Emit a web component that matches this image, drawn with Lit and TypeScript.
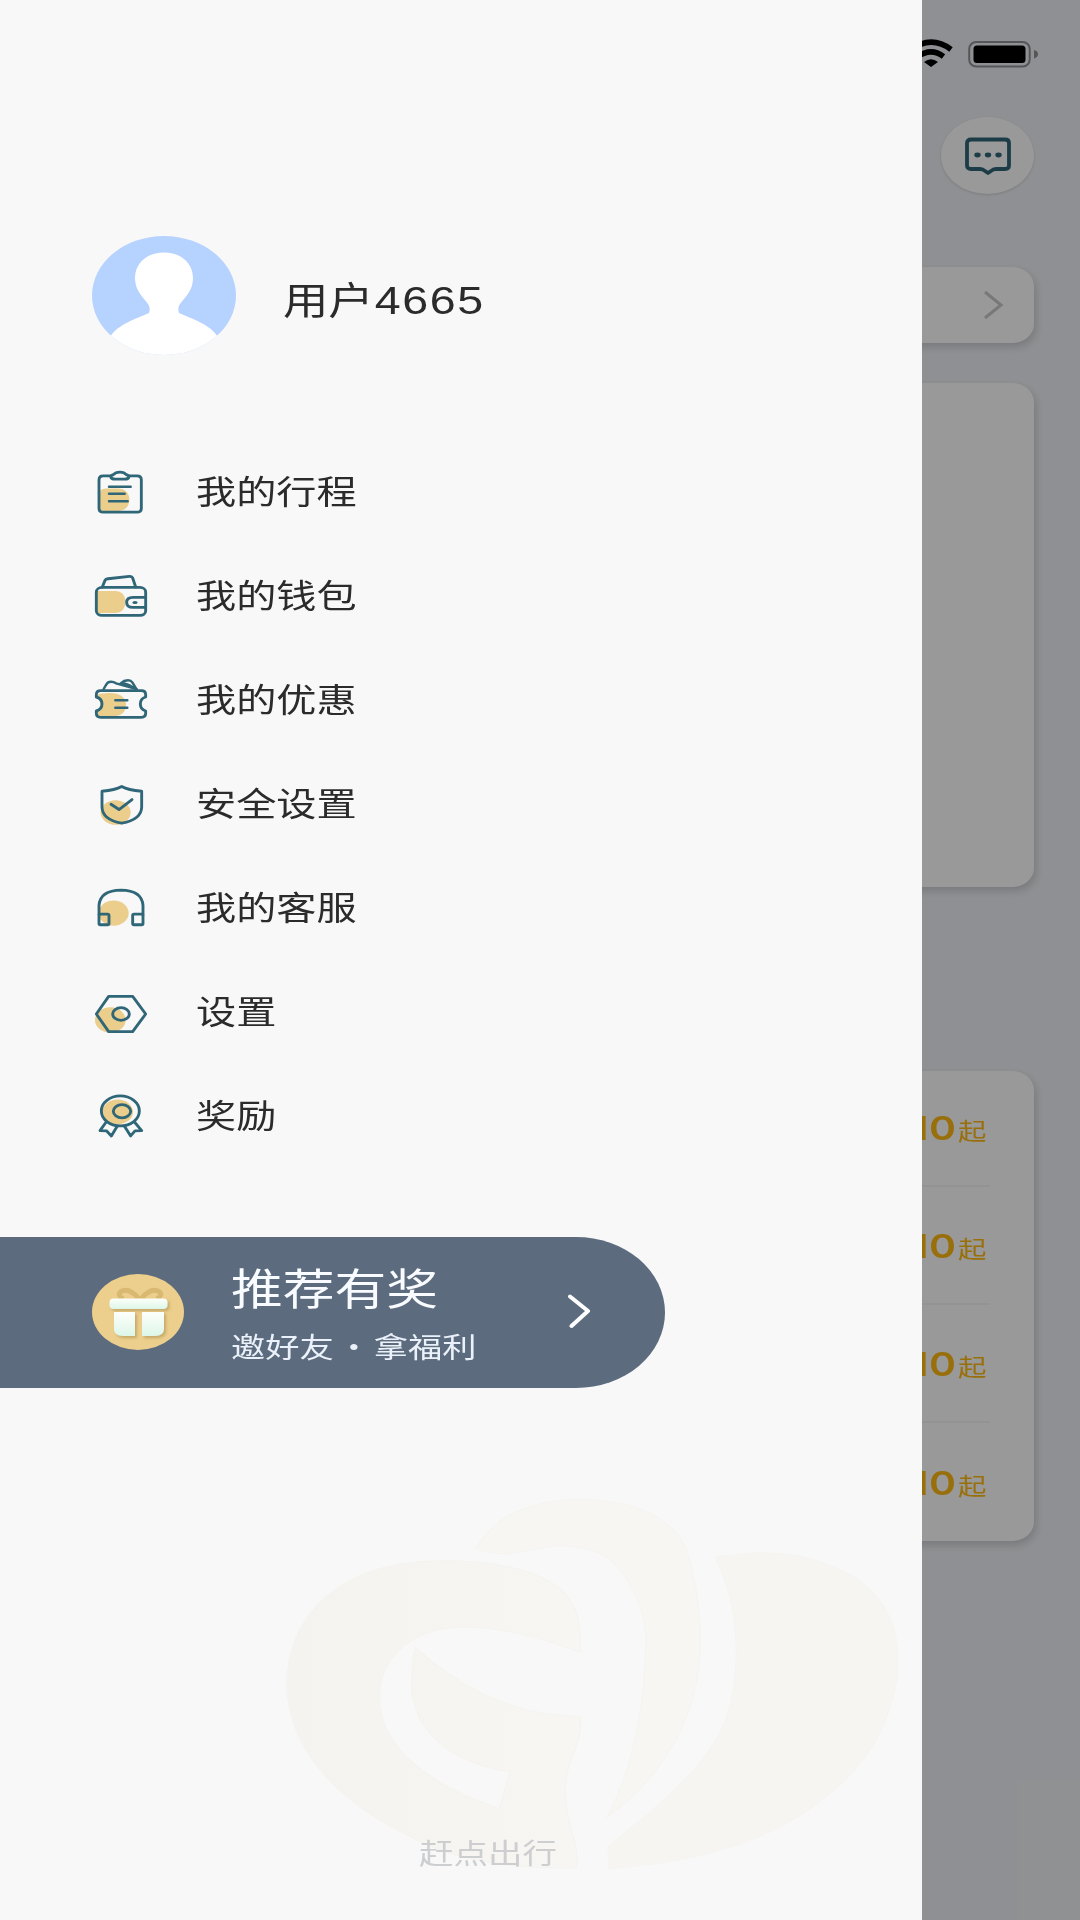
import { LitElement, html, css, svg } from "lit";
import { customElement } from "lit/decorators.js";

interface MenuItem {
  label: string;
  box: string;
  icon: unknown;
}

const MENU: MenuItem[] = [
  {
    label: "我的行程",
    box: "36 46.5 180 156",
    icon: svg`
      <path class="tint" d="M60 186V124Q64 114 80 114H112C136 114 148 128 148 148C148 168 136 181 112 182Z"/>
      <path class="line" d="M92 76H70Q57 76 57 88V173Q57 185 70 185H171Q184 185 184 173V88Q184 76 171 76H147"/>
      <path class="line" d="M92 78Q93 74 101 72Q106 65 120 65Q133 65 138 72Q146 74 147 78Q146 86 134 86H106Q93 86 92 78Z"/>
      <path class="line thin" d="M87 109H152M87 130H134M87 152H143"/>`,
  },
  {
    label: "我的钱包",
    box: "36 358.8 180 156",
    icon: svg`
      <path class="tint" d="M50 422H104C126 422 136 436 136 454C136 474 126 488 104 488H50Z"/>
      <path class="line" d="M67 410L75 390Q77 386 84 385L148 378Q156 377 158 383L167 410"/>
      <rect class="line" x="49" y="411" width="148" height="84" rx="17" ry="14"/>
      <path class="line" d="M197 441H159Q140 441 140 456Q140 471 159 471H197"/>
      <ellipse class="dot" cx="165" cy="456" rx="8" ry="4.5"/>`,
  },
  {
    label: "我的优惠",
    box: "36 41 180 156",
    icon: svg`
      <path class="tint" d="M54 103Q60 97 96 98C126 100 138 116 138 133C138 152 126 166 106 167H60Q50 165 50 154Q60 142 62 131Q60 118 47 112Z"/>
      <path class="line thin" d="M71 86L79 72Q83 64 93 64Q101 64 108 69L170 86M122 69Q132 60 144 60Q153 60 157 66L168 84M122 70Q140 68 158 81"/>
      <path class="line" d="M62 91H184Q197 91 197 103V110Q181 115 181 131Q181 147 197 152V159Q197 171 184 171H62Q49 171 49 159V152Q66 147 66 131Q66 115 49 110V103Q49 91 62 91Z"/>
      <path class="line thin" d="M106 120H142M106 142H142"/>`,
  },
  {
    label: "安全设置",
    box: "36 353.4 180 156",
    icon: svg`
      <ellipse class="tint" cx="107" cy="457" rx="45" ry="37"/>
      <path class="line" d="M125 379Q144 390 185 393V441Q184 478 125 489Q67 478 66 441V393Q106 390 125 379Z"/>
      <path class="line" d="M93 432L117 448L156 418"/>`,
  },
  {
    label: "我的客服",
    box: "36 35.7 180 156",
    icon: svg`
      <ellipse class="tint" cx="101" cy="129" rx="45" ry="38"/>
      <path class="line" d="M57 134V106Q60 61 123 60Q186 61 189 106V134"/>
      <rect class="line" x="57" y="132" width="30" height="32" rx="4"/>
      <rect class="line" x="158" y="132" width="31" height="32" rx="4"/>`,
  },
  {
    label: "设置",
    box: "36 348 180 156",
    icon: svg`
      <ellipse class="tint" cx="91" cy="450" rx="46" ry="38"/>
      <path class="line" d="M86 379H158L197 432L158 485H86L49 432Z"/>
      <ellipse class="line" cx="123" cy="432" rx="25" ry="19"/>`,
  },
  {
    label: "奖励",
    box: "36 660.3 180 156",
    icon: svg`
      <ellipse class="tint" cx="113" cy="726" rx="46" ry="37"/>
      <ellipse class="line" cx="121" cy="723" rx="57" ry="45"/>
      <ellipse class="line" cx="126" cy="724" rx="26" ry="20"/>
      <path class="line" d="M78 757L60 782L80 783L94 798L112 768M164 757L185 782L165 783L152 798L133 768"/>`,
  },
];

@customElement("app-root")
export class AppRoot extends LitElement {
  static styles = css`
    :host {
      display: block;
      position: relative;
      width: 1080px;
      height: 1920px;
      overflow: hidden;
      font-family: "Noto Sans CJK SC", sans-serif;
      color: #2b2b2b;
    }
    svg {
      display: block;
      flex: none;
    }
    .home {
      box-sizing: border-box;
      height: 1920px;
      padding: 39px 46px 0 46px;
      background: #eff1f5;
      display: flex;
      flex-direction: column;
    }
    .status {
      display: flex;
      justify-content: flex-end;
      gap: 14px;
      height: 30px;
      margin-right: -6px;
    }
    .chat {
      align-self: flex-end;
      width: 93px;
      height: 77px;
      margin-top: 48px;
      border-radius: 50%;
      background: #fff;
      box-shadow: 0 1px 3px rgba(0, 0, 0, 0.14);
      display: flex;
      align-items: center;
      justify-content: center;
    }
    .panel {
      background: #fff;
      border-radius: 22px / 19px;
      box-shadow: 2px 4px 8px rgba(20, 30, 40, 0.18);
    }
    .search {
      height: 76px;
      margin-top: 73px;
      display: flex;
      align-items: center;
      justify-content: flex-end;
    }
    .search svg {
      margin-right: 30px;
    }
    .map {
      height: 504px;
      margin-top: 40px;
    }
    .prices {
      box-sizing: border-box;
      height: 470px;
      margin-top: 184px;
      padding: 0 44px 0 48px;
    }
    .price {
      box-sizing: border-box;
      height: 116px;
      margin-bottom: 2.2px;
      display: flex;
      justify-content: flex-end;
      align-items: baseline;
      padding: 32px 4px 0 0;
      border-bottom: 2px solid #f5f6f6;
      color: #fdb913;
      line-height: 50px;
    }
    .price:last-child {
      border: 0;
    }
    .amount {
      font: 600 33px/50px Inter, sans-serif;
      transform: scaleX(1.24);
      transform-origin: right;
      margin-right: 1px;
      letter-spacing: 0.4px;
    }
    .from {
      width: 28px;
      font-size: 23.5px;
      transform: scaleX(1.21);
      transform-origin: left;
    }
    .scrim {
      position: absolute;
      inset: 0;
      background: rgba(0, 0, 0, 0.4);
    }
    .drawer {
      position: absolute;
      inset: 0 auto 0 0;
      width: 922px;
      box-sizing: border-box;
      padding-top: 236px;
      background: #f8f8f8;
      display: flex;
      flex-direction: column;
    }
    .wide {
      display: inline-block;
      white-space: nowrap;
      transform: scaleX(1.21);
      transform-origin: left;
    }
    .user {
      display: flex;
      align-items: center;
      height: 119px;
      padding-left: 92px;
      gap: 47px;
    }
    .name {
      font-size: 37.5px;
      line-height: 54px;
      padding-top: 7px;
    }
    .digits {
      font-family: "Liberation Sans", sans-serif;
      font-size: 38.5px;
      letter-spacing: 1.3px;
      margin-left: 0.8px;
    }
    .menu {
      margin-top: 84.5px;
      display: flex;
      flex-direction: column;
    }
    .item {
      height: 104.1px;
      display: flex;
      align-items: center;
      padding-left: 92px;
      gap: 44px;
    }
    .label {
      font-size: 33.2px;
      line-height: 48px;
      margin-top: -3.6px;
    }
    .tint {
      fill: #ebcd8c;
    }
    .line {
      fill: none;
      stroke: #2f6678;
      stroke-width: 8.6;
      stroke-linecap: round;
      stroke-linejoin: round;
    }
    .thin {
      stroke-width: 7.4;
    }
    .dot {
      fill: #2f6678;
    }
    .banner {
      box-sizing: border-box;
      width: 665px;
      height: 151px;
      margin-top: 69px;
      padding: 0 73px 2px 92px;
      border-radius: 0 89px 89px 0 / 0 75.5px 75.5px 0;
      background: #5c6b7d;
      color: #f8fbff;
      display: flex;
      align-items: center;
    }
    .promo {
      flex: 1;
      padding-left: 47px;
      display: flex;
      flex-direction: column;
      align-items: flex-start;
    }
    .title {
      font-size: 42.8px;
      line-height: 62px;
      margin-top: -2px;
    }
    .sub {
      font-size: 28.3px;
      line-height: 42px;
      margin-top: 8px;
      word-spacing: -3.9px;
      color: #eaf1fa;
    }
    .mark {
      position: absolute;
      left: 270px;
      top: 1470px;
    }
    .brand {
      position: relative;
      margin: auto 0 47px 419px;
      width: 115px;
      font-size: 28.5px;
      line-height: 42px;
      color: #cccecf;
    }
  `;

  private home() {
    return html`
      <div class="home">
        <div class="status">
          <svg width="46" height="30" viewBox="0 0 46 30">
            <g fill="none" stroke="#000" stroke-width="5.600">
              <path d="M1.500 11.500Q23 -4.500 43 10.500"/>
              <path d="M9 18Q23 8 35.500 17.500"/>
            </g>
            <path d="M16 23Q23 17.500 30 23L23 28Z"/>
          </svg>
          <svg width="72" height="30" viewBox="0 0 72 30">
            <rect x="1.200" y="3" width="60.500" height="24.500" rx="7" fill="none" stroke="#8f9093" stroke-width="2"/>
            <rect x="5.500" y="6.500" width="52" height="17.500" rx="3.500"/>
            <path d="M66 11Q70 12 70 15.200Q70 18 66 19.500Z" fill="#8f9093"/>
          </svg>
        </div>
        <div class="chat">
          <svg width="48" height="38" viewBox="0 0 48 38">
            <path d="M7 2.500H41Q45 2.500 45 6V28.500Q45 32 41 32H32Q29 32 27 34L24 36L21 34Q19 32 16 32H7Q3 32 3 28.500V6Q3 2.500 7 2.500Z" fill="none" stroke="#2f6678" stroke-width="3.800" stroke-linejoin="round"/>
            <g fill="#2f6678">
              <ellipse cx="13.500" cy="18" rx="3.200" ry="2.400"/>
              <ellipse cx="24" cy="18" rx="3.200" ry="2.400"/>
              <ellipse cx="34.500" cy="18" rx="3.200" ry="2.400"/>
            </g>
          </svg>
        </div>
        <div class="panel search">
          <svg width="21" height="30" viewBox="0 0 21 30">
            <path d="M2 2L18 15L2 28" fill="none" stroke="#c9c9c9" stroke-width="3"/>
          </svg>
        </div>
        <div class="panel map"></div>
        <div class="panel prices">
          ${[0, 1, 2, 3].map(
            () => html`<div class="price"><span class="amount">10</span><span class="from">起</span></div>`
          )}
        </div>
      </div>
    `;
  }

  private watermark() {
    return html`
      <svg class="mark" width="652" height="450" viewBox="0 0 1549 1350" preserveAspectRatio="none">
        <defs>
          <linearGradient id="leaf" x1="0" x2="1" y1="0" y2="0">
            <stop offset="0" stop-color="#f4f3f0"/>
            <stop offset="1" stop-color="#f7f6f2"/>
          </linearGradient>
        </defs>
        <path fill="#f7f6f2" stroke="#f5f4f0" stroke-width="3" d="M490 236C530 140 620 88 740 88C880 92 960 150 990 240C1030 400 1030 570 1005 680C970 840 890 960 800 1042C870 880 890 690 893 520C895 430 860 330 810 270C770 235 700 215 640 235C590 250 540 262 490 236Z"/>
        <path fill="url(#leaf)" stroke="#f4f3ef" stroke-width="3" d="M738 546C640 505 560 470 455 472C340 474 262 560 260 680C260 840 390 950 545 1016L570 905C450 885 345 800 337 660Q335 580 346 533C440 640 560 735 738 740C740 850 700 850 702 980C705 1080 735 1110 728 1194C560 1196 440 1170 340 1104C150 990 45 830 40 650C40 430 170 275 400 272C500 270 640 290 700 370C740 430 735 470 738 546Z"/>
        <path fill="#f6f5f2" stroke="#f5f4f0" stroke-width="3" d="M1058 262C1180 235 1290 250 1380 315C1470 390 1500 480 1490 620C1470 780 1410 900 1300 1000C1190 1110 1020 1175 806 1196L803 1130C920 1010 1030 900 1080 760C1120 620 1120 420 1058 262Z"/>
      </svg>
    `;
  }

  render() {
    return html`
      ${this.home()}
      <div class="scrim"></div>
      <div class="drawer">
        ${this.watermark()}
        <div class="user">
          <svg width="144" height="119" viewBox="0 0 144 119">
            <clipPath id="face"><ellipse cx="72" cy="59.500" rx="72" ry="59.500"/></clipPath>
            <g clip-path="url(#face)">
              <rect width="144" height="119" fill="#b6d2ff"/>
              <path fill="#fff" d="M72 16.500C90 16.500 101 28 101 42C101 54 94 60 88 68C86 71 86 74 87 77C100 83 118 88 126 101V119H18V101C26 88 44 83 57 77C58 74 58 71 56 68C50 60 43 54 43 42C43 28 54 16.500 72 16.500Z"/>
            </g>
          </svg>
          <div class="name wide">用户<span class="digits">4665</span></div>
        </div>
        <div class="menu">
          ${MENU.map(
            (m) => html`
              <div class="item">
                <svg width="60" height="52" viewBox=${m.box}>${m.icon}</svg>
                <span class="label wide">${m.label}</span>
              </div>
            `
          )}
        </div>
        <div class="banner">
          <svg width="92" height="76" viewBox="0 0 92 76">
            <defs>
              <linearGradient id="gift" x1="0" x2="0" y1="0" y2="1">
                <stop offset="0" stop-color="#fdfffb"/>
                <stop offset="1" stop-color="#ddf6e8"/>
              </linearGradient>
              <filter id="soft" x="-20%" y="-20%" width="150%" height="150%">
                <feDropShadow dx="2" dy="2" stdDeviation="1.500" flood-color="#a58748" flood-opacity="0.55"/>
              </filter>
            </defs>
            <ellipse cx="46" cy="38" rx="46" ry="38" fill="#eccf8d"/>
            <g fill="none" stroke="#d9b971" stroke-width="5">
              <path d="M47 25Q38 14 30 17Q24 20 31 25"/>
              <path d="M49 25Q58 14 66 17Q72 20 65 25"/>
            </g>
            <g fill="url(#gift)" filter="url(#soft)">
              <rect x="17.500" y="24.500" width="58" height="10.500" rx="4"/>
              <path d="M22 38H43V62H31Q22 62 22 55Z"/>
              <path d="M50 38H72V55Q72 62 63 62H50Z"/>
            </g>
          </svg>
          <div class="promo">
            <span class="title wide">推荐有奖</span>
            <span class="sub wide">邀好友 · 拿福利</span>
          </div>
          <svg width="26" height="36" viewBox="0 0 26 36">
            <path d="M4 2.500L22 17L5.500 32" fill="none" stroke="#fff" stroke-width="4" stroke-linecap="round" stroke-linejoin="round"/>
          </svg>
        </div>
        <div class="brand wide">赶点出行</div>
      </div>
    `;
  }
}
